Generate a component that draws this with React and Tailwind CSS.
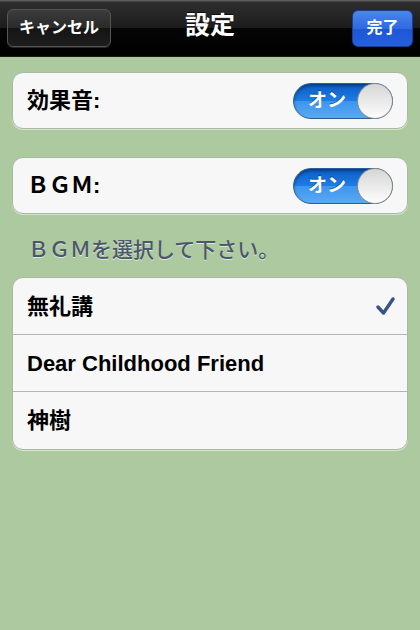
import React from "react";

const jp = { fontFamily: '"Liberation Sans", "Noto Sans CJK JP", sans-serif' };

function Toggle() {
  return (
    <div className="relative w-[100px] h-[36px] rounded-full border border-[#2b5d9b] bg-[linear-gradient(#0a5bc4_0%,#1e7ee6_50%,#3d95ee_51%,#5aa9f3_100%)] shadow-[inset_0_2px_3px_rgba(0,0,0,0.35)]">
      <span className="absolute left-[14px] top-[5px] text-white font-bold text-[19px] leading-[24px] [text-shadow:0_-1px_0_rgba(0,0,0,0.4)]" style={jp}>オン</span>
      <div className="absolute right-[-1px] top-[-1px] w-[36px] h-[36px] rounded-full border border-[#8a8a8a] bg-[linear-gradient(#d6d6d6,#fdfdfd)]" />
    </div>
  );
}

function Check() {
  return (
    <svg width="19" height="18" viewBox="0 0 19 18">
      <path d="M2 10 L7.5 16 L17 2" fill="none" stroke="#385487" strokeWidth="3.4" strokeLinecap="round" strokeLinejoin="round" />
    </svg>
  );
}

export default function App() {
  return (
    <div className="w-[420px] h-[630px] bg-[#adc9a0] flex flex-col" style={jp}>
      <div className="h-[57px] flex items-center justify-between px-[7px] relative bg-[linear-gradient(#6a6a6a_0%,#2e2e2e_4%,#1c1c1c_50%,#050505_51%,#000_100%)] border-b border-[#1a1a1a]">
        <div className="h-[38px] w-[104px] rounded-[6px] border border-[#555] bg-[linear-gradient(#3c3c3c_0%,#2a2a2a_50%,#141414_51%,#1e1e1e_100%)] flex items-center justify-center text-white font-bold text-[16px] shadow-[0_1px_0_rgba(255,255,255,0.15)]">
          キャンセル
        </div>
        <div className="absolute left-0 right-0 top-0 h-[52px] flex items-center justify-center text-white font-bold text-[25px] pointer-events-none [text-shadow:0_-1px_0_rgba(0,0,0,0.6)]">
          設定
        </div>
        <div className="h-[37px] w-[61px] rounded-[6px] border border-[#1a3f90] bg-[linear-gradient(#4a86ea_0%,#2e6ae0_50%,#1d56d6_51%,#2560dc_100%)] flex items-center justify-center text-white font-bold text-[16px]">
          完了
        </div>
      </div>

      <div className="px-[12px] pt-[15px]">
        <div className="h-[57px] rounded-[11px] bg-[#f7f7f7] border border-[#a9b8a2] flex items-center justify-between pl-[14px] pr-[14px] shadow-[0_1px_0_rgba(255,255,255,0.5)]">
          <span className="text-[22px] font-bold text-black">効果音:</span>
          <Toggle />
        </div>
      </div>

      <div className="px-[12px] pt-[28px]">
        <div className="h-[57px] rounded-[11px] bg-[#f7f7f7] border border-[#a9b8a2] flex items-center justify-between pl-[14px] pr-[14px] shadow-[0_1px_0_rgba(255,255,255,0.5)]">
          <span className="text-[22px] font-bold text-black">ＢＧＭ:</span>
          <Toggle />
        </div>
      </div>

      <div className="px-[28px] pt-[22px] pb-[13px] text-[21px] font-medium text-[#4c566c] leading-[28px] [text-shadow:0_1px_0_rgba(255,255,255,0.6)]">
        ＢＧＭを選択して下さい。
      </div>

      <div className="px-[12px]">
        <div className="rounded-[11px] bg-[#f7f7f7] border border-[#a9b8a2] overflow-hidden shadow-[0_1px_0_rgba(255,255,255,0.5)]">
          <div className="h-[57px] flex items-center justify-between pl-[14px] pr-[12px] border-b border-[#b4b4b4]">
            <span className="text-[22px] font-bold text-black">無礼講</span>
            <Check />
          </div>
          <div className="h-[57px] flex items-center pl-[14px] border-b border-[#b4b4b4]">
            <span className="text-[22px] font-bold text-black">Dear Childhood Friend</span>
          </div>
          <div className="h-[57px] flex items-center pl-[14px]">
            <span className="text-[22px] font-bold text-black">神樹</span>
          </div>
        </div>
      </div>
    </div>
  );
}
